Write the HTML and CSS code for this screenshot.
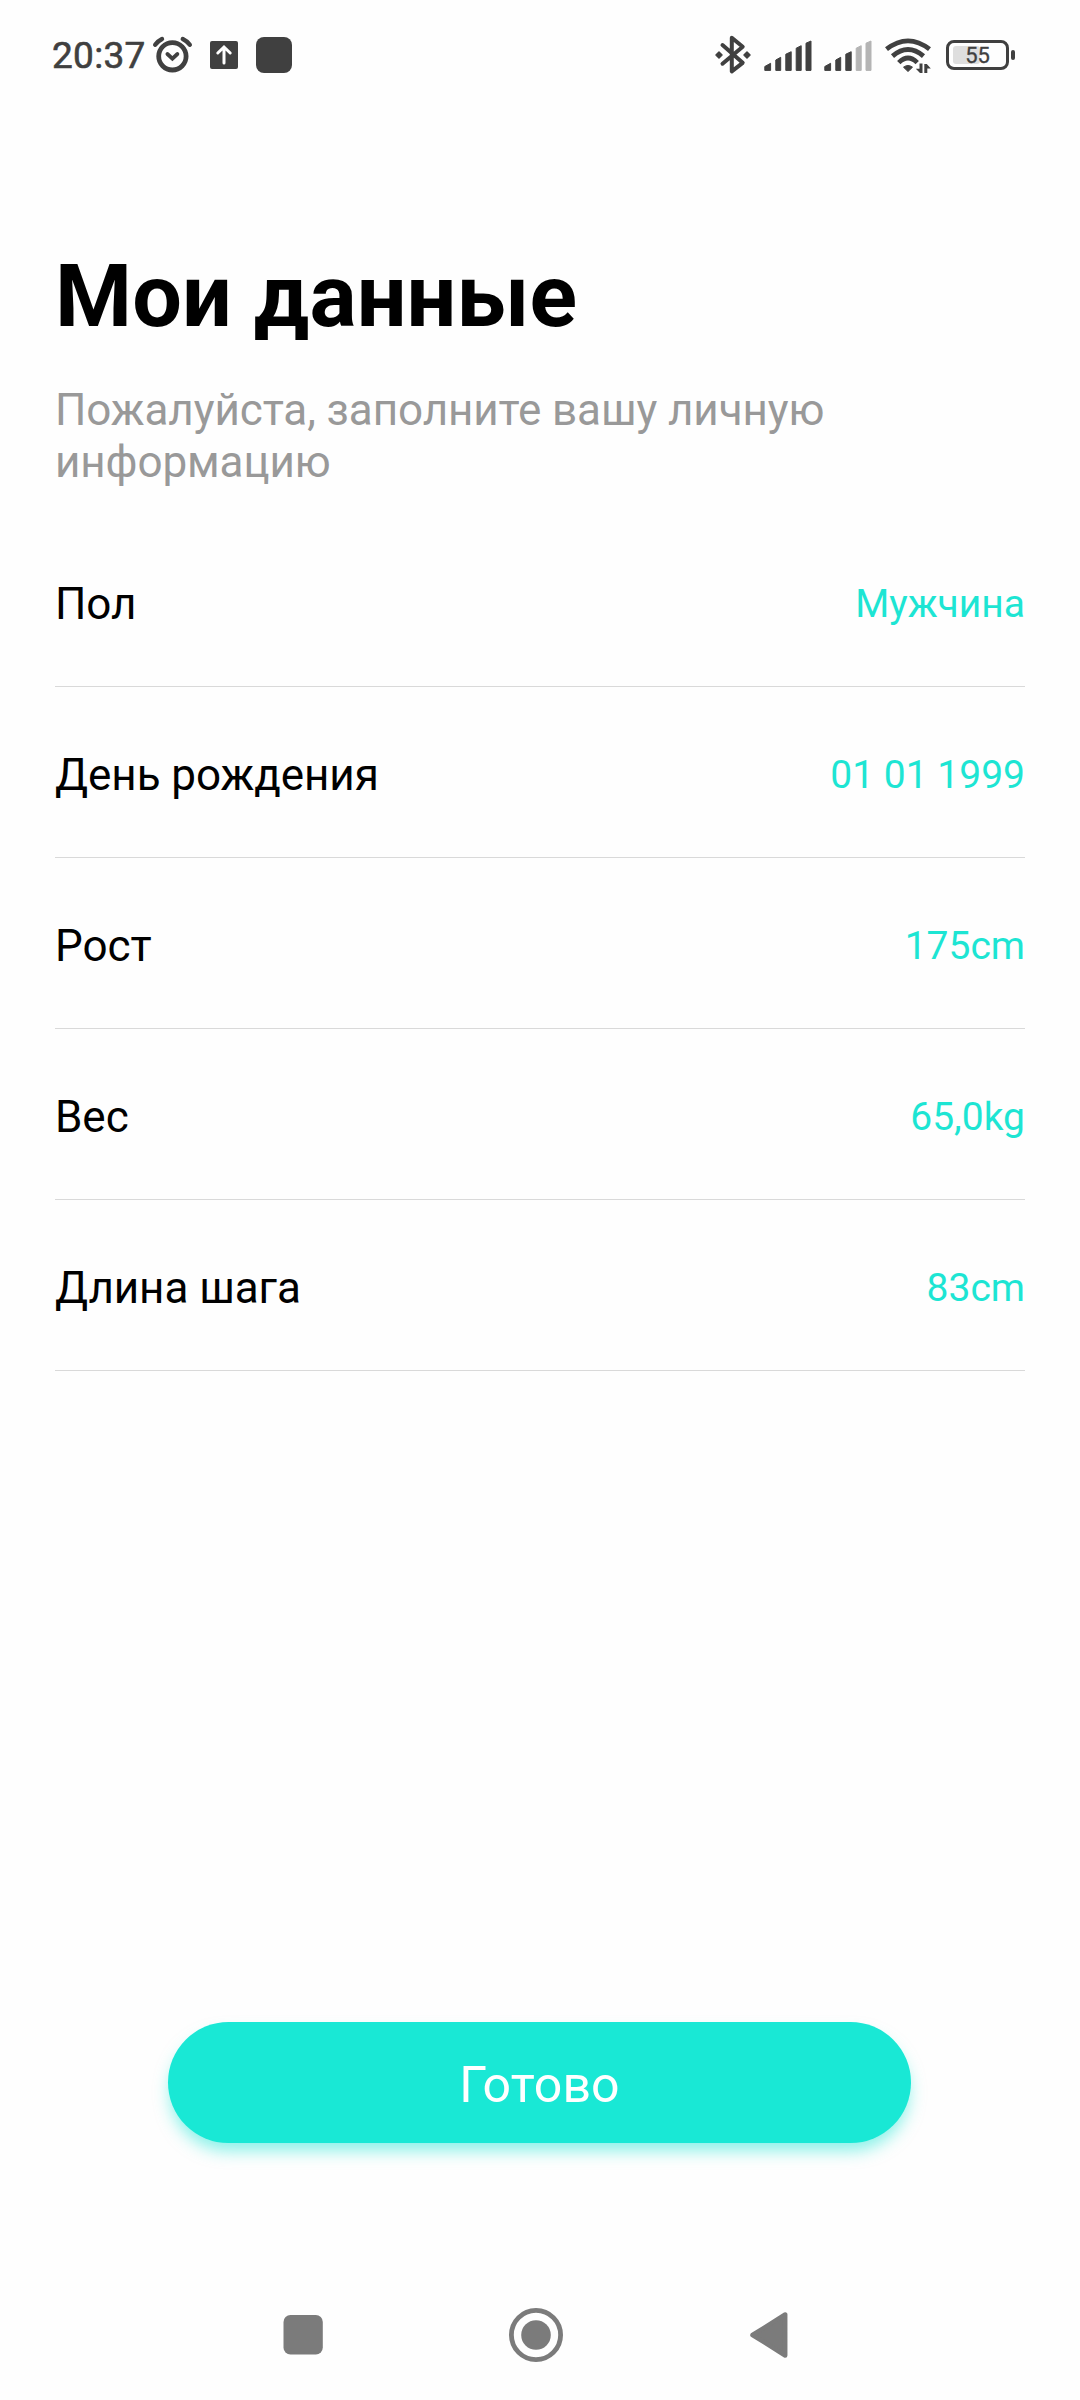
FILE: index.html
```html
<!DOCTYPE html>
<html lang="ru">
<head>
  <meta charset="UTF-8" />
  <meta name="viewport" content="width=device-width, initial-scale=1.0" />
  <title>Мои данные</title>
  <link rel="stylesheet" href="styles.css">
</head>
<body>

  <!-- STATUS BAR -->
  <header class="status-bar">
    <div class="status-left">
      <span class="clock">20:37</span>
      <svg class="icon-alarm" width="42" height="40" viewBox="152 35 42 40">
        <circle cx="172.4" cy="56.3" r="13.7" fill="none" stroke="#404040" stroke-width="4.8"/>
        <path d="M155.2 44.8Q158 41 162 39M182.800 39Q187 41 189.800 44.800" fill="none" stroke="#404040" stroke-width="4.400" stroke-linecap="round"/>
        <path d="M167.400 54L172.400 58.600L177.400 54" fill="none" stroke="#404040" stroke-width="3.800" stroke-linecap="round"/>
      </svg>
      <svg class="icon-upload" width="28" height="28" viewBox="0 0 28 28">
        <rect width="28" height="28" rx="2" fill="#404040"/>
        <path d="M14 22V6.500M7.800 12L14 6L20.200 12" fill="none" stroke="#fff" stroke-width="3" stroke-linecap="round"/>
      </svg>
      <span class="icon-app"></span>
    </div>
    <div class="status-right">
      <svg class="icon-bluetooth" width="38" height="40" viewBox="714 35 38 40">
        <path d="M722.500 45L742.700 62.800L731.800 71.300V37.700L742.700 46.800L722.500 63.700" fill="none" stroke="#404040" stroke-width="4" stroke-linejoin="round" stroke-linecap="round"/>
        <path d="M716 55l3-3 3 3-3 3zM744 55l3-3 3 3-3 3z" fill="#404040" stroke="#404040" stroke-width="1.500" stroke-linejoin="round"/>
      </svg>
      <svg class="icon-signal" width="48" height="32" viewBox="0 0 48 32">
        <path d="M0.800 31.400V27.500L6.600 24.300V31.400zM11.800 31.400V21L16.700 18.300V31.400zM21.800 31.400V15.200L27.200 12.700V31.400zM32.200 31.400V9.200L37.200 6.700V31.400zM42 31.400V4.200L47 2V31.400z" fill="#404040" stroke="#404040" stroke-linejoin="round"/>
      </svg>
      <svg class="icon-signal" width="48" height="32" viewBox="0 0 48 32">
        <path d="M0.800 31.400V27.500L6.600 24.300V31.400zM11.800 31.400V21L16.700 18.300V31.400zM21.800 31.400V15.200L27.200 12.700V31.400z" fill="#404040" stroke="#404040" stroke-linejoin="round"/>
        <path d="M32.200 31.400V9.200L37.200 6.700V31.400zM42 31.400V4.200L47 2V31.400z" fill="#b4b4b4" stroke="#b4b4b4" stroke-linejoin="round"/>
      </svg>
      <svg class="icon-wifi" width="48" height="38" viewBox="884 36 48 38">
        <path d="M886.500 49.200Q908 32.500 929.500 49.200M892.500 56.200Q908 43 923.500 56.200M898.800 62.600Q908 53.400 917.200 62.600" fill="none" stroke="#404040" stroke-width="4.800"/>
        <path d="M903.500 67.200Q908 63.800 912.500 67.200L908 71.500z" fill="#404040" stroke="#404040" stroke-linejoin="round"/>
        <path d="M919.500 63.500H922.500V73H920L915.800 68.800H919.500zM924.300 73V64H926.800L930.800 68.500H927.300V73z" fill="#404040"/>
      </svg>
      <div class="battery">
        <span class="battery-level"></span>
        <span class="battery-text">55</span>
      </div>
    </div>
  </header>

  <!-- PROFILE FORM -->
  <main class="content">
    <h1 class="title">Мои данные</h1>
    <p class="subtitle">Пожалуйста, заполните вашу личную информацию</p>

    <div class="rows">
      <div class="row">
        <span class="row-label">Пол</span>
        <span class="row-value">Мужчина</span>
      </div>
      <div class="row">
        <span class="row-label">День рождения</span>
        <span class="row-value">01 01 1999</span>
      </div>
      <div class="row">
        <span class="row-label">Рост</span>
        <span class="row-value">175cm</span>
      </div>
      <div class="row">
        <span class="row-label">Вес</span>
        <span class="row-value">65,0kg</span>
      </div>
      <div class="row">
        <span class="row-label">Длина шага</span>
        <span class="row-value">83cm</span>
      </div>
    </div>

    <button class="done-btn" type="button">Готово</button>
  </main>

  <!-- NAVIGATION BAR -->
  <nav class="nav-bar">
    <svg width="56" height="56" viewBox="0 0 56 56">
      <rect x="8.500" y="8" width="39.300" height="39.500" rx="7" fill="#7b7b7b"/>
    </svg>
    <svg width="56" height="56" viewBox="0 0 56 56">
      <circle cx="28" cy="28" r="24.600" fill="none" stroke="#7b7b7b" stroke-width="4.800"/>
      <circle cx="28" cy="28" r="14.800" fill="#7b7b7b"/>
    </svg>
    <svg width="56" height="56" viewBox="0 0 56 56">
      <path d="M11.500 28L44.200 7.500V48.500z" fill="#7b7b7b" stroke="#7b7b7b" stroke-width="4.500" stroke-linejoin="round"/>
    </svg>
  </nav>

</body>
</html>
```

FILE: styles.css
```css
* { margin: 0; padding: 0; box-sizing: border-box; }

body {
  width: 1080px;
  height: 2400px;
  display: flex;
  flex-direction: column;
  overflow: hidden;
  background: #fefefe;
  font-family: Roboto, "Noto Sans", sans-serif;
  color: #000;
}

svg {
  display: block;
  flex-shrink: 0;
}

/* STATUS BAR */
.status-bar {
  height: 110px;
  padding: 0 65px 0 52px;
  display: flex;
  justify-content: space-between;
}

.status-left,
.status-right {
  height: 110px;
  display: flex;
  align-items: center;
}

.clock {
  width: 100px;
  padding-top: 2px;
  font-size: 37px;
  line-height: 44px;
  letter-spacing: 0.3px;
  color: #404040;
  -webkit-text-stroke: 0.6px #404040;
}

.icon-upload {
  margin-left: 16px;
}

.icon-app {
  width: 36px;
  height: 36px;
  margin-left: 18px;
  border-radius: 8px;
  background: #404040;
}

.icon-signal {
  margin-left: 12px;
}

.icon-wifi {
  margin-left: 12px;
}

.battery {
  position: relative;
  width: 63px;
  height: 30px;
  margin: 0 6px 0 14px;
  border: 3px solid #404040;
  border-radius: 8px;
  display: flex;
  align-items: center;
  justify-content: center;
}

.battery::after {
  content: "";
  position: absolute;
  right: -9px;
  top: 7px;
  width: 4px;
  height: 10px;
  border-radius: 2px;
  background: #404040;
}

.battery-level {
  position: absolute;
  left: 4px;
  top: 3px;
  width: 27px;
  height: 18px;
  border-radius: 3px;
  background: #dedede;
}

.battery-text {
  position: relative;
  padding-top: 2px;
  font-size: 22px;
  line-height: 24px;
  color: #404040;
  -webkit-text-stroke: 0.3px #404040;
}

/* CONTENT */
.content {
  flex: 1;
  padding: 134px 55px 0;
  display: flex;
  flex-direction: column;
}

.title {
  font-size: 88px;
  font-weight: 700;
  line-height: 104px;
  letter-spacing: 0.1px;
}

.subtitle {
  width: 800px;
  margin-top: 36px;
  font-size: 44px;
  line-height: 52px;
  letter-spacing: -0.09px;
  color: #999;
}

.rows {
  margin-top: 28px;
}

.row {
  height: 171px;
  padding-top: 5px;
  border-bottom: 1px solid #d9d9d9;
  display: flex;
  align-items: center;
  justify-content: space-between;
}

.row-label {
  font-size: 44px;
  line-height: 52px;
  letter-spacing: -0.05px;
}

.row-value {
  padding-top: 1px;
  font-size: 39px;
  line-height: 48px;
  color: #1de5d3;
}

.done-btn {
  width: 743px;
  height: 121px;
  margin: 651px 0 0 113px;
  padding-top: 5px;
  border: none;
  border-radius: 61px;
  background: #19e8d5;
  box-shadow: 0 10px 16px -2px rgba(25, 232, 213, 0.5);
  font-family: inherit;
  font-size: 50px;
  letter-spacing: 0.1px;
  color: #fff;
}

/* NAVIGATION BAR */
.nav-bar {
  height: 130px;
  padding: 37px 0 0 275px;
  display: flex;
  gap: 177px;
}
```
